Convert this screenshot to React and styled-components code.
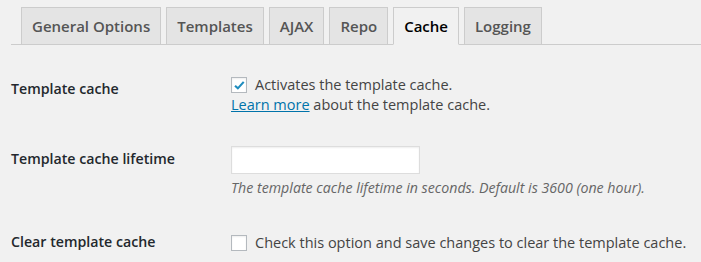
import React, {useState} from 'react'
import styled, {createGlobalStyle} from 'styled-components'

const GlobalStyle = createGlobalStyle`
body{
    margin:0;
    background:#f1f1f1;
    font-family:"Open Sans", "Liberation Sans", sans-serif;
    color:#444;
}
`
const Page = styled.div`
padding:0 0 0 11px;
`
const TabBar = styled.div`
display:flex;
align-items:flex-end;
padding:7px 0 0 10px;
border-bottom:1px solid #ccc;
gap:5px;
`
const Tab = styled.a`
display:block;
margin-bottom:-1px;
padding:6px 10px;
font-size:15px;
line-height:24px;
font-weight:600;
border:1px solid #ccc;
border-bottom:1px solid ${props => props.active ? '#f1f1f1' : '#ccc'};
background:${props => props.active ? '#f1f1f1' : '#e4e4e4'};
color:${props => props.active ? '#000' : '#555'};
cursor:pointer;
`
const Form = styled.div`
margin-top:15px;
display:flex;
flex-direction:column;
`
const Row = styled.div`
display:flex;
`
const Label = styled.div`
width:200px;
padding:20px 10px 20px 0;
font-size:14.2px;
line-height:18px;
font-weight:600;
color:#23282d;
`
const Field = styled.div`
padding:${props => props.top || 15}px 10px 15px;
font-size:14.5px;
line-height:19.5px;
color:#444;
`
const CheckLine = styled.label`
display:flex;
align-items:center;
gap:8px;
height:20px;
cursor:pointer;
`
const Box = styled.span`
width:14px;
height:14px;
border:1px solid #b4b9be;
background:#fff;
box-shadow:inset 0 1px 2px rgba(0,0,0,0.07);
display:flex;
align-items:center;
justify-content:center;
svg{
    width:13px;
    height:13px;
}
`
const Link = styled.a`
color:#0073aa;
text-decoration:underline;
`
const Input = styled.input`
display:block;
margin:1px 0;
box-sizing:border-box;
width:189px;
height:28px;
border:1px solid #ddd;
background:#fff;
box-shadow:inset 0 1px 2px rgba(0,0,0,0.07);
`
const Description = styled.p`
margin:4px 0 0;
font-size:14.2px;
line-height:20px;
font-style:italic;
color:#666;
`

const Checkbox = ({checked, onChange, children}) => (
    <CheckLine onClick={onChange}>
        <Box>
            {checked &&
            <svg viewBox="0 0 16 16">
                <path d="M2.5 8.2 L6 11.5 L13.2 3.5" fill="none" stroke="#1e8cbe" strokeWidth="2.6" />
            </svg>}
        </Box>
        <span>{children}</span>
    </CheckLine>
)

const tabs = ['General Options', 'Templates', 'AJAX', 'Repo', 'Cache', 'Logging']

const App = () => {
    const [active, setActive] = useState('Cache')
    const [cache, setCache] = useState(true)
    const [clear, setClear] = useState(false)
  return (
    <Page>
        <GlobalStyle />
        <TabBar>
            {tabs.map(t => (
                <Tab key={t} active={t === active ? 1 : 0} onClick={() => setActive(t)}>{t}</Tab>
            ))}
        </TabBar>
        <Form>
            <Row>
                <Label>Template cache</Label>
                <Field>
                    <Checkbox checked={cache} onChange={() => setCache(!cache)}>Activates the template cache.</Checkbox>
                    <div><Link>Learn more</Link> about the template cache.</div>
                </Field>
            </Row>
            <Row>
                <Label>Template cache lifetime</Label>
                <Field>
                    <Input type="text" />
                    <Description>The template cache lifetime in seconds. Default is 3600 (one hour).</Description>
                </Field>
            </Row>
            <Row>
                <Label>Clear template cache</Label>
                <Field top={20}>
                    <Checkbox checked={clear} onChange={() => setClear(!clear)}>Check this option and save changes to clear the template cache.</Checkbox>
                </Field>
            </Row>
        </Form>
    </Page>
  )
}

export default App
